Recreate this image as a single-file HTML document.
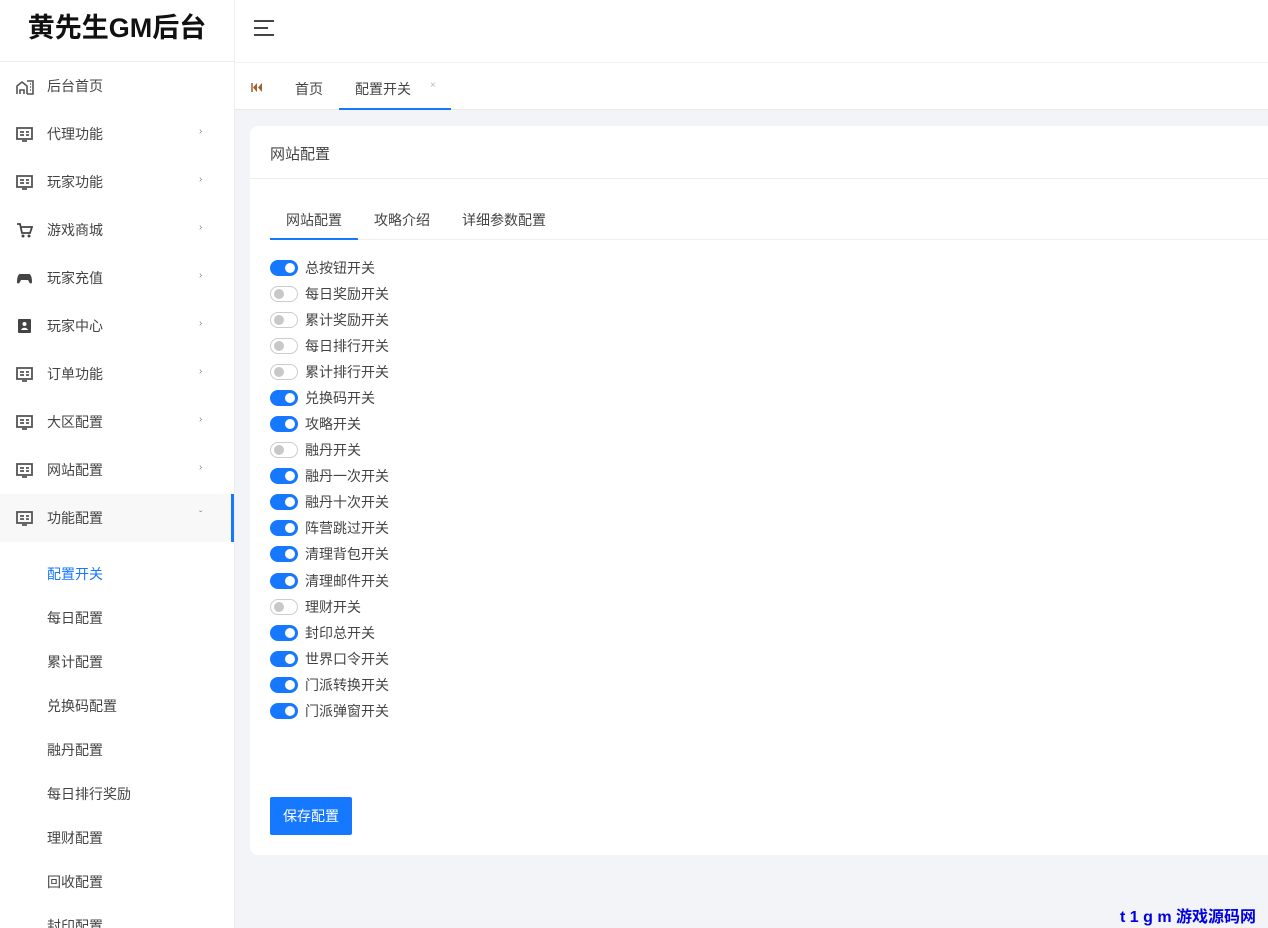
<!DOCTYPE html>
<html><head><meta charset="utf-8"><style>
*{margin:0;padding:0;box-sizing:border-box}
html,body{width:1268px;height:928px;overflow:hidden}
body{background:#f3f4f8;font-family:"Liberation Sans","Noto Sans CJK SC",sans-serif;color:#444;font-size:14px;position:relative}
.side{position:absolute;left:0;top:0;width:235px;height:928px;background:#fff;border-right:1px solid #eee}
.logo{height:62px;border-bottom:1px solid #eee;font-size:27px;font-weight:bold;color:#111;text-align:center;line-height:56px}
.item{position:absolute;left:0;width:234px;height:48px;line-height:48px;padding-left:47px;font-size:14px;color:#444}
.item svg{position:absolute;left:16px;top:17px}
.item .ar{position:absolute;left:199px;top:-2px;font-size:10px;color:#888}
.act{background:#f8f8f9}
.act:after{content:"";position:absolute;right:0;top:0;width:3px;height:48px;background:#1677ff}
.sub{position:absolute;left:47px;font-size:14px;color:#444}
.top{position:absolute;left:235px;top:0;right:0;height:63px;background:#fff;border-bottom:1px solid #f0f0f0}
.tabs{position:absolute;left:235px;top:63px;right:0;height:47px;background:#fff;border-bottom:1px solid #e8e8e8}
.card{position:absolute;left:250px;top:126px;width:1030px;height:729px;background:#fff;border-radius:8px}
.sw{position:absolute;left:270px;width:28px;height:16px;border-radius:8px}
.on{background:#1677ff}
.on:after{content:"";position:absolute;right:3px;top:3px;width:10px;height:10px;border-radius:50%;background:#fff}
.off{background:#fff;border:1px solid #ccc}
.off:after{content:"";position:absolute;left:3px;top:2px;width:10px;height:10px;border-radius:50%;background:#c8c8c8}
.lb{position:absolute;left:305px;font-size:14px;color:#444}
</style></head><body>
<div class="side">
<div class="logo">黄先生GM后台</div>
<div class="item" style="top:62px"><svg width="18" height="16" viewBox="0 0 18 16"><path d="M1 15V7l5-4 5 4v8M4 15v-4h4v4M11 2h6v13h-6M14 5h1M14 8h1M14 11h1" fill="none" stroke="#555" stroke-width="1.6"/></svg>后台首页</div>
<div class="item" style="top:110px"><svg width="17" height="15" viewBox="0 0 17 15"><rect x="1" y="1" width="15" height="11" fill="none" stroke="#555" stroke-width="1.8"/><path d="M4 5h4M4 8h4M10 5h3M10 8h3M6 14h5" stroke="#555" stroke-width="1.8"/></svg>代理功能<span class="ar">›</span></div>
<div class="item" style="top:158px"><svg width="17" height="15" viewBox="0 0 17 15"><rect x="1" y="1" width="15" height="11" fill="none" stroke="#555" stroke-width="1.8"/><path d="M4 5h4M4 8h4M10 5h3M10 8h3M6 14h5" stroke="#555" stroke-width="1.8"/></svg>玩家功能<span class="ar">›</span></div>
<div class="item" style="top:206px"><svg width="17" height="15" viewBox="0 0 17 15"><path d="M1 1h3l2 9h8l2-6H5" fill="none" stroke="#444" stroke-width="1.8"/><circle cx="7" cy="13" r="1.5" fill="#444"/><circle cx="13" cy="13" r="1.5" fill="#444"/></svg>游戏商城<span class="ar">›</span></div>
<div class="item" style="top:254px"><svg width="17" height="15" viewBox="0 0 17 15"><path d="M4 3h9c2 0 3 4 3 8 0 2-2 2-3 0l-1-2H5l-1 2c-1 2-3 2-3 0 0-4 1-8 3-8z" fill="#444"/></svg>玩家充值<span class="ar">›</span></div>
<div class="item" style="top:302px"><svg width="17" height="15" viewBox="0 0 17 15"><rect x="2" y="0" width="13" height="14" rx="1" fill="#444"/><circle cx="8.5" cy="5" r="2" fill="#fff"/><path d="M5 11c1-3 6-3 7 0z" fill="#fff"/></svg>玩家中心<span class="ar">›</span></div>
<div class="item" style="top:350px"><svg width="17" height="15" viewBox="0 0 17 15"><rect x="1" y="1" width="15" height="11" fill="none" stroke="#555" stroke-width="1.8"/><path d="M4 5h4M4 8h4M10 5h3M10 8h3M6 14h5" stroke="#555" stroke-width="1.8"/></svg>订单功能<span class="ar">›</span></div>
<div class="item" style="top:398px"><svg width="17" height="15" viewBox="0 0 17 15"><rect x="1" y="1" width="15" height="11" fill="none" stroke="#555" stroke-width="1.8"/><path d="M4 5h4M4 8h4M10 5h3M10 8h3M6 14h5" stroke="#555" stroke-width="1.8"/></svg>大区配置<span class="ar">›</span></div>
<div class="item" style="top:446px"><svg width="17" height="15" viewBox="0 0 17 15"><rect x="1" y="1" width="15" height="11" fill="none" stroke="#555" stroke-width="1.8"/><path d="M4 5h4M4 8h4M10 5h3M10 8h3M6 14h5" stroke="#555" stroke-width="1.8"/></svg>网站配置<span class="ar">›</span></div>
<div class="item act" style="top:494px"><svg width="17" height="15" viewBox="0 0 17 15"><rect x="1" y="1" width="15" height="11" fill="none" stroke="#555" stroke-width="1.8"/><path d="M4 5h4M4 8h4M10 5h3M10 8h3M6 14h5" stroke="#555" stroke-width="1.8"/></svg>功能配置<span class="ar">ˇ</span></div>
<div class="sub" style="top:564px;color:#1677ff">配置开关</div>
<div class="sub" style="top:608px">每日配置</div>
<div class="sub" style="top:652px">累计配置</div>
<div class="sub" style="top:696px">兑换码配置</div>
<div class="sub" style="top:740px">融丹配置</div>
<div class="sub" style="top:784px">每日排行奖励</div>
<div class="sub" style="top:828px">理财配置</div>
<div class="sub" style="top:872px">回收配置</div>
<div class="sub" style="top:916px">封印配置</div>
</div>
<div class="top"><svg style="position:absolute;left:19px;top:19px" width="21" height="18" viewBox="0 0 21 18"><path d="M0 2h20M0 9h14M0 16h20" stroke="#444" stroke-width="2"/></svg></div>
<div class="tabs">
<svg style="position:absolute;left:16px;top:20px" width="12" height="9" viewBox="0 0 12 9"><path d="M1 0v9" stroke="#a06030" stroke-width="1.5"/><path d="M6 0L2 4.5 6 9zM11 0L7 4.5 11 9z" fill="#a06030"/></svg>
<span style="position:absolute;left:60px;top:16px;font-size:14px;color:#444">首页</span>
<span style="position:absolute;left:120px;top:16px;font-size:14px;color:#444">配置开关</span>
<span style="position:absolute;left:195px;top:17px;font-size:10px;color:#bbb">×</span>
<div style="position:absolute;left:104px;top:45px;width:112px;height:2px;background:#1677ff"></div>
</div>
<div class="card">
<div style="position:absolute;left:20px;top:17px;font-size:15px;color:#444">网站配置</div>
<div style="position:absolute;left:0;right:0;top:52px;border-top:1px solid #eee"></div>
<div style="position:absolute;left:36px;top:84px;font-size:14px;color:#444">网站配置</div>
<div style="position:absolute;left:124px;top:84px;font-size:14px;color:#444">攻略介绍</div>
<div style="position:absolute;left:212px;top:84px;font-size:14px;color:#444">详细参数配置</div>
<div style="position:absolute;left:20px;right:0;top:113px;border-top:1px solid #eee"></div>
<div style="position:absolute;left:20px;top:112px;width:88px;height:2px;background:#1677ff"></div>
<div style="position:absolute;left:20px;top:671px;width:82px;height:38px;background:#1677ff;border-radius:2px;color:#fff;font-size:14px;text-align:center;line-height:38px">保存配置</div>
</div>
<div style="position:absolute;left:1120px;top:903px;font-size:16px;font-weight:bold;color:#0000e0">t 1 g m 游戏源码网</div>
<div class="sw on" style="top:260px"></div><div class="lb" style="top:258px">总按钮开关</div>
<div class="sw off" style="top:286px"></div><div class="lb" style="top:284px">每日奖励开关</div>
<div class="sw off" style="top:312px"></div><div class="lb" style="top:310px">累计奖励开关</div>
<div class="sw off" style="top:338px"></div><div class="lb" style="top:336px">每日排行开关</div>
<div class="sw off" style="top:364px"></div><div class="lb" style="top:362px">累计排行开关</div>
<div class="sw on" style="top:390px"></div><div class="lb" style="top:388px">兑换码开关</div>
<div class="sw on" style="top:416px"></div><div class="lb" style="top:414px">攻略开关</div>
<div class="sw off" style="top:442px"></div><div class="lb" style="top:440px">融丹开关</div>
<div class="sw on" style="top:468px"></div><div class="lb" style="top:466px">融丹一次开关</div>
<div class="sw on" style="top:494px"></div><div class="lb" style="top:492px">融丹十次开关</div>
<div class="sw on" style="top:520px"></div><div class="lb" style="top:518px">阵营跳过开关</div>
<div class="sw on" style="top:546px"></div><div class="lb" style="top:544px">清理背包开关</div>
<div class="sw on" style="top:573px"></div><div class="lb" style="top:571px">清理邮件开关</div>
<div class="sw off" style="top:599px"></div><div class="lb" style="top:597px">理财开关</div>
<div class="sw on" style="top:625px"></div><div class="lb" style="top:623px">封印总开关</div>
<div class="sw on" style="top:651px"></div><div class="lb" style="top:649px">世界口令开关</div>
<div class="sw on" style="top:677px"></div><div class="lb" style="top:675px">门派转换开关</div>
<div class="sw on" style="top:703px"></div><div class="lb" style="top:701px">门派弹窗开关</div>
</body></html>
